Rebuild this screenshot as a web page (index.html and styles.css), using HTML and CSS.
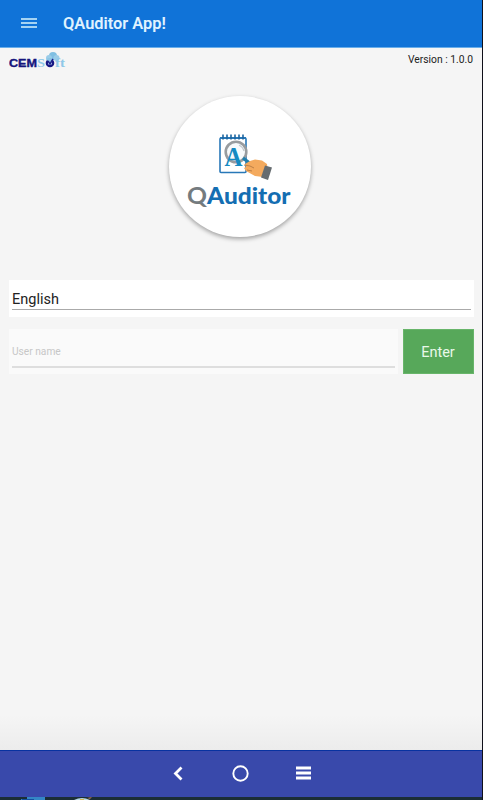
FILE: index.html
```html
<!DOCTYPE html>
<html lang="en">
<head>
  <meta charset="UTF-8"/>
  <meta name="viewport" content="width=device-width, initial-scale=1.0"/>
  <title>QAuditor App!</title>
  <link rel="stylesheet" href="styles.css">
</head>
<body>
  <header class="toolbar">
    <svg class="menu-icon" width="16" height="12" viewBox="0 0 16 12">
      <path d="M0 2h16M0 6h16M0 10h16" stroke="#a5d3f3" stroke-width="2"/>
    </svg>
    <h1>QAuditor App!</h1>
  </header>

  <main class="content">
    <div class="brand">
      <svg class="cemsoft" width="60" height="26" viewBox="0 0 60 26">
        <circle cx="44" cy="8" r="4" fill="#80bfe2"/>
        <circle cx="40" cy="10" r="3" fill="#9acce8"/>
        <circle cx="47.5" cy="10" r="3" fill="#9acce8"/>
        <text class="cem" x="0" y="19" textLength="28" lengthAdjust="spacingAndGlyphs">CEM</text>
        <text class="soft" x="28" y="19" textLength="8" lengthAdjust="spacingAndGlyphs">S</text>
        <circle cx="41" cy="15" r="3.2" fill="#c4e4f7" stroke="#171783" stroke-width="2.2"/>
        <path d="M37 11q3-2 7 0l-3 4z" fill="#8bc5e5"/>
        <path d="M39 13l2 3 3-5" fill="none" stroke="#20208c" stroke-width="1.5"/>
        <text class="soft" x="46" y="19" textLength="10" lengthAdjust="spacingAndGlyphs">ft</text>
      </svg>
      <span class="version">Version : 1.0.0</span>
    </div>

    <div class="logo">
      <svg width="141" height="141" viewBox="-1 0 141 141">
        <!-- notepad -->
        <rect x="50" y="42" width="26" height="34.5" rx="1" fill="#fff" stroke="#2878b8" stroke-width="1.6"/>
        <path d="M50 42h26" stroke="#2878b8" stroke-width="2"/>
        <path d="M53 38.5v5M57 38.5v5M61 38.5v5M65 38.5v5M69 38.5v5M73 38.5v5" stroke="#1d659f" stroke-width="1.6"/>
        <!-- magnifier -->
        <circle cx="66" cy="56" r="10.3" fill="#f7fafc" stroke="#989c9f" stroke-width="2.6"/>
        <path d="M69 49q4 2 5 6" fill="none" stroke="#c3c9cd" stroke-width="1.2"/>
        <text class="letter" x="54.5" y="70" textLength="18" lengthAdjust="spacingAndGlyphs">A</text>
        <path d="M73 62l9 7" stroke="#207fae" stroke-width="3.4"/>
        <!-- hand -->
        <path d="M75 68l5-3 5-1.5 7 1 5 3.5 1 9-5 4-8-1-9-5-2-3 2-1z" fill="#f4aa5e"/>
        <path d="M74 69l6 1 4 2M77 74l5 1" fill="none" stroke="#bd8047" stroke-width="1"/>
        <path d="M95 69.5l7 2-4 12.5-7-2.5z" fill="#666c70"/>
        <text class="logo-q" x="17" y="107.5" textLength="20" lengthAdjust="spacingAndGlyphs">Q</text>
        <text class="logo-name" x="37" y="107.5" textLength="83.5" lengthAdjust="spacingAndGlyphs">Auditor</text>
      </svg>
    </div>

    <div class="language"><div class="line">English</div></div>

    <form class="login">
      <label class="user"><input type="text" placeholder="User name"/></label>
      <button type="button">Enter</button>
    </form>
  </main>

  <nav class="navbar">
    <svg width="10" height="15" viewBox="0 0 10 15"><path d="M8.5 1.5l-6 6 6 6" fill="none" stroke="#fff" stroke-width="2.8"/></svg>
    <svg width="17" height="17" viewBox="0 0 17 17"><circle cx="8.5" cy="8.5" r="7.2" fill="none" stroke="#fff" stroke-width="1.9"/></svg>
    <svg width="15" height="14" viewBox="0 0 15 14"><path d="M0 2h15M0 7h15M0 12h15" stroke="#fff" stroke-width="2.8"/></svg>
  </nav>
  <footer class="desktop">
    <svg width="110" height="3" viewBox="0 0 110 3">
      <path d="M27 0h18v3H21V2h6z" fill="#3486c5"/>
      <path d="M22 2h12v1H22z" fill="#154fa0"/>
      <path d="M74 3q8-4 16 0z" fill="#b7d8e4"/>
      <path d="M80 2h4v1h-4z" fill="#d6b551"/>
      <path d="M87 1l5-1-2 2z" fill="#a5714c"/>
    </svg>
  </footer>
</body>
</html>
```
FILE: styles.css
```css
* { box-sizing:border-box; }
body { margin:0; height:800px; display:flex; flex-direction:column; overflow:hidden; background:#f5f5f5; border-right:1px solid #10101a; font-family:Roboto, sans-serif; }
svg { display:block; flex-shrink:0; }
.toolbar { height:48px; display:flex; align-items:center; padding:0 0 1px 21px; background:#1073d8; border-bottom:1px solid #69aeea; }
.toolbar h1 { margin:1px 0 0 26px; font-size:16.4px; font-weight:600; line-height:20px; color:#e0f3ff; }
.content { flex:1; padding:0 8px 0 9px; background:linear-gradient(#f5f5f5 95%, #ececec); }
.brand { height:48px; display:flex; justify-content:space-between; }
.cem { font:bold 11.5px "Liberation Sans", sans-serif; fill:#15157d; stroke:#15157d; stroke-width:.4px; }
.soft { font:bold 13px "Liberation Serif", serif; fill:#8fc8e8; }
.version { margin:5px 1px 0 0; font-size:10.3px; line-height:13px; color:#222; }
.logo { width:142px; height:141px; margin:0 0 0 160.4px; border-radius:50%; background:#fff; box-shadow:0 2px 4px rgba(0,0,0,.34); }
.letter { font:bold 27px "Liberation Serif", serif; fill:#168ac2; }
.logo-q { font:bold 23px Lato, sans-serif; fill:#747b7f; }
.logo-name { font:900 23px Lato, sans-serif; fill:#146eb2; }
.language { height:37px; margin-top:43px; padding:0 3px; background:#fff; }
.line { height:30px; padding-top:10px; border-bottom:1px solid #aaa; font-size:14.5px; line-height:19px; color:#222; }
.login { display:flex; gap:5px; height:45px; margin-top:12px; }
.user { flex:1; padding:0 3px; background:#fafafa; }
.user input { display:block; width:100%; height:39px; padding:8px 0 0; border:0; border-bottom:2px solid #dedede; outline:0; background:none; font:10.2px Roboto, sans-serif; }
.user input::placeholder { color:#c7c7c7; opacity:1; }
.login button { width:71px; padding:2px 1px 0 0; border:1px solid #68b56a; background:#57a85a; color:#e9f8e9; font:14.5px Roboto, sans-serif; }
.navbar { height:47px; display:flex; align-items:center; justify-content:center; gap:47px; padding:0 0 2px 2px; background:#3949ab; border-top:1px solid #0832a0; }
.navbar svg:first-child { margin-right:2px; }
.desktop { height:3px; background:#1b2e36; }
```
